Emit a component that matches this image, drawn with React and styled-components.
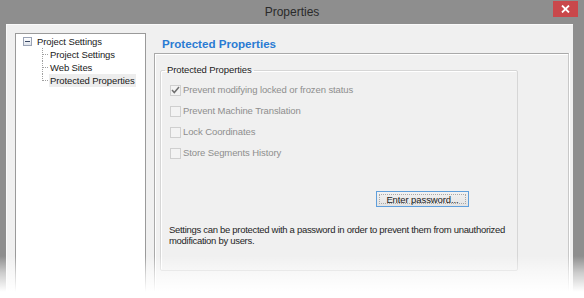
import React from "react";
import styled, { createGlobalStyle } from "styled-components";

const GlobalStyle = createGlobalStyle`
  html, body {
    margin: 0;
    padding: 0;
    background: #ffffff;
  }
  body {
    font-family: "Liberation Sans", Arial, sans-serif;
  }
`;

const treeChildren = ["Project Settings", "Web Sites", "Protected Properties"];

const options = [
  { label: "Prevent modifying locked or frozen status", checked: true },
  { label: "Prevent Machine Translation", checked: false },
  { label: "Lock Coordinates", checked: false },
  { label: "Store Segments History", checked: false },
];

const App = () => {
  return (
    <>
      <GlobalStyle />
      <Window>
        <TitleBar>
          <span />
          <Title>Properties</Title>
          <CloseButton>
            <svg width="9" height="8" viewBox="0 0 9 8">
              <path d="M1 0.5 L8 7.5 M8 0.5 L1 7.5" stroke="#fff" strokeWidth="1.8" />
            </svg>
          </CloseButton>
        </TitleBar>
        <Client>
          <Tree>
            <TreeRoot>
              <Expander />
              <TreeText>Project Settings</TreeText>
            </TreeRoot>
            <TreeList>
              {treeChildren.map((name, i) => (
                <TreeItem key={name} $last={i === treeChildren.length - 1}>
                  <TreeText $selected={i === treeChildren.length - 1}>{name}</TreeText>
                </TreeItem>
              ))}
            </TreeList>
          </Tree>
          <Main>
            <Heading>Protected Properties</Heading>
            <Page>
              <Group>
                <Legend>Protected Properties</Legend>
                <Options>
                  {options.map((o) => (
                    <Option key={o.label}>
                      <Box>
                        {o.checked && (
                          <svg width="9" height="8" viewBox="0 0 9 8">
                            <path d="M1 4 L3.3 6.5 L8 1" stroke="#6f6f6f" strokeWidth="1.5" fill="none" />
                          </svg>
                        )}
                      </Box>
                      <OptionLabel>{o.label}</OptionLabel>
                    </Option>
                  ))}
                </Options>
                <ButtonRow>
                  <PushButton>
                    <FocusRect>Enter password...</FocusRect>
                  </PushButton>
                </ButtonRow>
                <Note>
                  Settings can be protected with a password in order to prevent them from unauthorized
                  <br />
                  modification by users.
                </Note>
              </Group>
            </Page>
          </Main>
        </Client>
        <Fade />
      </Window>
    </>
  );
};

export default App;

const Window = styled.div`
  position: relative;
  width: 584px;
  height: 298px;
  overflow: hidden;
  background: #8e8e8e;
  display: flex;
  flex-direction: column;
`;

const TitleBar = styled.div`
  height: 24px;
  flex-shrink: 0;
  display: grid;
  grid-template-columns: 1fr auto 1fr;
  align-items: start;
`;

const Title = styled.div`
  font-size: 12px;
  line-height: 24px;
  color: #2a2a2a;
`;

const CloseButton = styled.div`
  justify-self: end;
  margin: 1px 6px 0 0;
  width: 25px;
  height: 16px;
  background: #c9484b;
  display: flex;
  align-items: center;
  justify-content: center;
`;

const Client = styled.div`
  flex: 1;
  margin: 0 11px 0 6px;
  background: #f0f0f0;
  border-top: 1px solid #fafafa;
  border-left: 1px solid #fafafa;
  display: flex;
  gap: 8px;
  padding: 8px 4px 0 8px;
  font-size: 9.5px;
  letter-spacing: -0.1px;
`;

const Tree = styled.div`
  width: 129px;
  flex-shrink: 0;
  background: #ffffff;
  border: 1px solid #9a9a9a;
  border-bottom: none;
  padding: 1px 0 0 0;
  color: #1a1a1a;
`;

const TreeRoot = styled.div`
  display: flex;
  align-items: center;
  height: 13px;
  padding-left: 7px;
`;

const Expander = styled.span`
  width: 7px;
  height: 7px;
  border: 1px solid #9aa3b5;
  background: linear-gradient(#ffffff, #dfe4ec);
  margin-right: 4px;
  position: relative;
  flex-shrink: 0;

  &::after {
    content: "";
    position: absolute;
    left: 1px;
    right: 1px;
    top: 3px;
    height: 1px;
    background: #3b4a66;
  }
`;

const TreeText = styled.span`
  line-height: 13px;
  padding: 0 1px;
  background: ${(p) => (p.$selected ? "#ededed" : "transparent")};
  white-space: nowrap;
`;

const TreeList = styled.div`
  margin-left: 26px;
`;

const TreeItem = styled.div`
  position: relative;
  height: 13px;
  padding-left: 7px;
  display: flex;
  align-items: center;

  &::before {
    content: "";
    position: absolute;
    left: 0;
    top: 0;
    height: ${(p) => (p.$last ? "7px" : "13px")};
    border-left: 1px dotted #a0a0a0;
  }

  &::after {
    content: "";
    position: absolute;
    left: 0;
    top: 6px;
    width: 6px;
    border-top: 1px dotted #a0a0a0;
  }
`;

const Main = styled.div`
  flex: 1;
  display: flex;
  flex-direction: column;
`;

const Heading = styled.div`
  font-size: 11.6px;
  font-weight: bold;
  color: #2a7bd3;
  letter-spacing: 0;
  padding: 4px 0 0 8px;
  height: 20px;
  box-sizing: border-box;
  line-height: 14px;
`;

const Page = styled.div`
  flex: 1;
  border-top: 1px solid #a9a9a9;
  border-left: 1px solid #a9a9a9;
  border-right: 1px solid #c8c8c8;
  box-shadow: inset 1px 1px 0 #ffffff, 1px 0 0 #ffffff;
  padding: 10px 0 0 5px;
`;

const Group = styled.fieldset`
  width: 358px;
  height: 207px;
  box-sizing: border-box;
  margin: 0;
  padding: 0;
  border: 1px solid #d6d6d6;
  border-radius: 2px;
  box-shadow: inset 1px 1px 0 #ffffff;
  color: #1a1a1a;
`;

const Legend = styled.legend`
  margin-left: 4px;
  padding: 0 2px;
  line-height: 12px;
  color: #222222;
`;

const Options = styled.div`
  display: flex;
  flex-direction: column;
  gap: 9px;
  padding: 8px 0 0 9px;
`;

const Option = styled.div`
  display: flex;
  align-items: center;
  gap: 2px;
  height: 12px;
`;

const Box = styled.span`
  width: 11px;
  height: 11px;
  box-sizing: border-box;
  border: 1px solid #cfcfcf;
  background: #f3f3f3;
  display: flex;
  align-items: center;
  justify-content: center;
`;

const OptionLabel = styled.span`
  color: #8e8e8e;
  line-height: 12px;
`;

const ButtonRow = styled.div`
  padding: 32px 0 0 215px;
`;

const PushButton = styled.div`
  width: 93px;
  height: 16px;
  box-sizing: border-box;
  border: 1px solid #5f9fdc;
  background: linear-gradient(#f2f2f2, #e3e3e3);
  padding: 2px;
  display: flex;
`;

const FocusRect = styled.span`
  flex: 1;
  border: 1px dotted #a8a8a8;
  display: flex;
  align-items: center;
  justify-content: center;
  color: #1a1a1a;
  line-height: 9px;
`;

const Note = styled.p`
  margin: 17px 0 0 8px;
  line-height: 11px;
  color: #1f1f1f;
  white-space: nowrap;
  letter-spacing: -0.3px;
`;

const Fade = styled.div`
  position: absolute;
  left: 0;
  right: 0;
  bottom: 0;
  height: 42px;
  background: linear-gradient(rgba(255, 255, 255, 0), rgba(255, 255, 255, 0.55) 40%, #ffffff 85%);
  pointer-events: none;
`;
